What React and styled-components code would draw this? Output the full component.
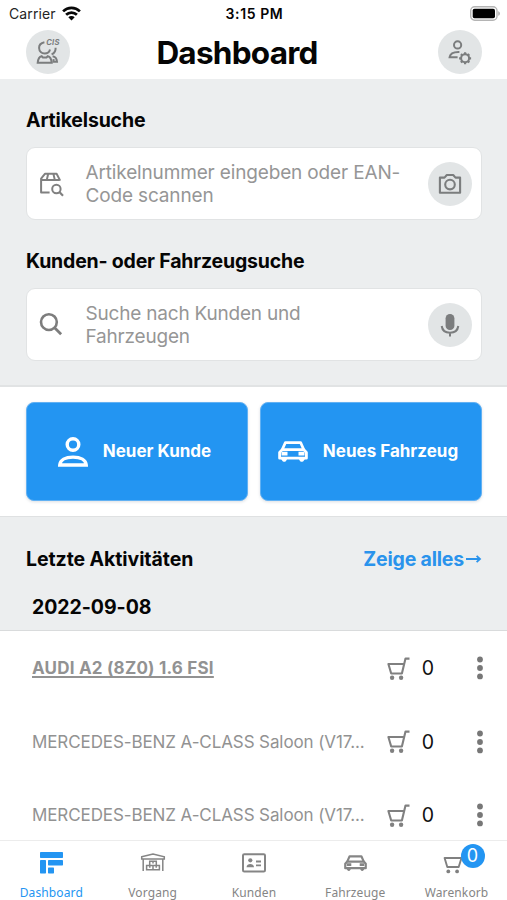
import React from "react";
import styled, { createGlobalStyle } from "styled-components";

const GlobalStyle = createGlobalStyle`
  *, *::before, *::after { box-sizing: border-box; }
  html, body { margin: 0; padding: 0; background: #fff; }
  body { font-family: Inter, "Liberation Sans", sans-serif; color: #050505; overflow: hidden; }
  button { font: inherit; border: 0; padding: 0; margin: 0; background: none; color: inherit; }
  svg { display: block; flex: none; overflow: visible; }
`;

const Screen = styled.div`
  width: 507px;
  height: 900px;
  display: flex;
  flex-direction: column;
  overflow: hidden;
  background: #fff;
`;

const Label = styled.span`
  font-size: ${(p) => p.$size}px;
  font-weight: ${(p) => p.$weight || 400};
  letter-spacing: ${(p) => p.$track || 0}px;
  color: ${(p) => p.$color || "inherit"};
  white-space: nowrap;
`;

const StatusBar = styled.div`
  height: 28px;
  flex: none;
  display: grid;
  grid-template-columns: 1fr auto 1fr;
  align-items: center;
  padding: 0 7px 0 9px;
  line-height: 28px;
`;

const Carrier = styled.div`
  display: flex;
  align-items: center;
  gap: 6px;
`;

const BatterySlot = styled.div`
  display: flex;
  justify-content: flex-end;
  padding-bottom: 2px;
`;

const Header = styled.header`
  height: 51px;
  flex: none;
  display: flex;
  align-items: flex-start;
  justify-content: space-between;
  padding: 2px 24.5px 0 25.5px;
`;

const Title = styled.h1`
  margin: 0 34px 0 0;
  font-size: 31.5px;
  line-height: 45px;
  font-weight: 700;
  letter-spacing: -0.75px;
`;

const RoundButton = styled.button`
  width: 44px;
  height: 44px;
  flex: none;
  border-radius: 50%;
  display: flex;
  align-items: center;
  justify-content: center;
  background: #e2e5e6;
  color: #7b7d7e;
`;

const SearchSection = styled.section`
  height: 308px;
  flex: none;
  padding: 27px 25px 0 26px;
  background: #eceeef;
  border-bottom: 2px solid #e1e3e4;
`;

const SearchGroup = styled.div`
  height: 141px;
`;

const SectionTitle = styled.h2`
  margin: 0;
  font-size: 19.5px;
  line-height: 28px;
  font-weight: 700;
  letter-spacing: ${(p) => p.$track || 0}px;
`;

const SearchBox = styled.div`
  margin-top: 13px;
  height: 73px;
  display: flex;
  align-items: center;
  padding: 0 9.5px 0 12px;
  background: #fff;
  border: 1px solid #e1e3e4;
  border-radius: 9px;
`;

const Placeholder = styled.div`
  flex: 1;
  margin-left: 20.5px;
  font-size: 19px;
  line-height: 23px;
  letter-spacing: ${(p) => p.$track || 0}px;
  color: #969696;
  white-space: pre-line;
`;

const Actions = styled.section`
  height: 129px;
  flex: none;
  display: grid;
  grid-template-columns: 1fr 1fr;
  gap: 12px;
  padding: 15px 25px 15px 26px;
`;

const ActionButton = styled.button`
  display: flex;
  align-items: center;
  justify-content: center;
  gap: 15px;
  padding: 0 ${(p) => p.$shift || 0}px 1px 0;
  background: #2395f2;
  color: #fff;
  border-radius: 8px;
  border: 1px solid #62b1f3;
  box-shadow: 0 1px 3px rgba(60, 80, 100, 0.18);
`;

const ActivityHeader = styled.section`
  height: 115px;
  flex: none;
  background: #eceeef;
  border-top: 1px solid #dfe1e2;
  border-bottom: 1px solid #d9dbdc;
  padding: 27.5px 26px 0;
`;

const HeadingRow = styled.div`
  display: flex;
  justify-content: space-between;
  align-items: center;
  height: 28px;
`;

const ShowAll = styled.button`
  display: flex;
  align-items: center;
  gap: 2px;
  color: #2a93ec;
`;

const DateLine = styled.div`
  margin: 20px 0 0 6px;
  height: 28px;
  line-height: 28px;
`;

const Activities = styled.main`
  height: 209px;
  flex: none;
  overflow: hidden;
  padding-top: 0.6px;
`;

const ActivityRow = styled.div`
  height: 73.4px;
  display: grid;
  grid-template-columns: 354.5px 23px 37px 1fr;
  align-items: center;
  padding: 0 23px 0 32px;
`;

const Vehicle = styled.span`
  font-size: 17px;
  line-height: 26px;
  color: #929292;
  font-weight: ${(p) => (p.$current ? 700 : 400)};
  letter-spacing: ${(p) => p.$track}px;
  text-decoration: ${(p) => (p.$current ? "underline" : "none")};
  text-decoration-thickness: 1.5px;
  text-underline-offset: 1.5px;
  text-decoration-skip-ink: none;
  white-space: nowrap;
  justify-self: start;
`;

const Count = styled.span`
  font-size: 19.5px;
  text-align: center;
  color: #111;
`;

const MenuSlot = styled.span`
  display: flex;
  justify-content: flex-end;
`;

const TabBar = styled.nav`
  height: 60px;
  flex: none;
  display: grid;
  grid-template-columns: repeat(5, 101.3px);
  padding-left: 0.7px;
  border-top: 1px solid #ececec;
  background: #fff;
`;

const Tab = styled.button`
  display: flex;
  flex-direction: column;
  align-items: center;
  color: ${(p) => (p.$active ? "#2395f2" : "#858585")};
`;

const TabIcon = styled.span`
  position: relative;
  height: 44px;
  width: 34px;
  display: flex;
  align-items: center;
  justify-content: center;
`;

const TabLabel = styled.span`
  font-family: "Noto Sans", sans-serif;
  font-size: 12px;
  line-height: 16px;
  letter-spacing: 0.12px;
`;

const Badge = styled.span`
  position: absolute;
  left: 21px;
  top: 3px;
  width: 24px;
  height: 24px;
  border-radius: 50%;
  background: #2395f2;
  color: #fff;
  font-size: 18px;
  line-height: 23px;
  text-align: center;
`;

const WifiIcon = () => (
  <svg width="19" height="15" viewBox="0 0 19 15" fill="none" stroke="#080808" strokeWidth="2.7">
    <path d="M1.1 4.4a12 12 0 0 1 16.8 0" />
    <path d="M4.1 7.8a7.7 7.7 0 0 1 10.8 0" />
    <path d="M9.5 13.6 6.3 10.3a4.5 4.5 0 0 1 6.4 0Z" fill="#080808" stroke="none" />
  </svg>
);

const BatteryIcon = () => (
  <svg width="31" height="15" viewBox="0 0 31 15">
    <rect x="1.7" y="0.8" width="26.3" height="13.4" rx="4" fill="#fff" stroke="#b4b4b4" strokeWidth="1.4" />
    <rect x="3.7" y="2.8" width="22.3" height="9.4" rx="1.8" fill="#000" />
    <path d="M29.3 5.2c2 .7 2 3.9 0 4.6Z" fill="#a5a5a5" />
  </svg>
);

const CisIcon = () => (
  <svg width="24" height="26" viewBox="0 0 24 26" fill="none" stroke="currentColor" strokeWidth="2">
    <path d="M8.4 3.2C5 3.9 3 6 3.1 9c.1 3.2 2.5 5.4 5.6 5.4 2.8 0 4.7-1.5 5.3-4" />
    <path d="M19.6 8.8c.2 3.4-1.2 5.5-4 6.6" />
    <path d="M5.6 17.2c-3 .6-3.6 3-3.9 6.6h14c-.3-3.8-1-6-3.9-6.6l-1.3 1.3H6.9Z" />
    <path d="M16.6 17.2c3.2.4 4.2 2.4 4.4 5.6h-3.6l.3-2.6" />
    <text x="10.2" y="5.6" fill="currentColor" stroke="none" fontFamily="Inter, sans-serif" fontSize="7.6" fontStyle="italic" fontWeight="700" letterSpacing=".3">CIS</text>
  </svg>
);

const UserSettingsIcon = () => (
  <svg width="24" height="25" viewBox="0 0 24 25" fill="none" stroke="currentColor" strokeWidth="2">
    <circle cx="9.6" cy="4.9" r="3.6" />
    <path d="M11.4 11.9C6 11.7 2.2 13.2 1.6 17.2h8" />
    <circle cx="17.1" cy="18.3" r="4" />
    <path strokeWidth="2.2" d="M17.1 12.3v2M17.1 22.3v2M11.1 18.3h2M21.1 18.3h2M12.9 14.1l1.4 1.4M19.9 21.1l1.4 1.4M12.9 22.5l1.4-1.4M19.9 15.5l1.4-1.4" />
  </svg>
);

const PackageSearchIcon = () => (
  <svg width="26" height="26" viewBox="0 0 26 26" fill="none" stroke="#808080" strokeWidth="2" strokeLinejoin="round">
    <path d="M10.6 21.4H2.1V7.6l3.8-4.8h11.7l3.6 6.8M2.1 8.9h18.7M9.2 2.8 7.8 8.9M14.4 2.8l1.4 6.1" />
    <circle cx="17.4" cy="18" r="4.2" />
    <path strokeWidth="2.2" d="m20.4 21 3.6 3.7" />
  </svg>
);

const SearchIcon = () => (
  <svg width="26" height="26" viewBox="0 0 26 26" fill="none" stroke="#7d7d7d" strokeWidth="2.6">
    <circle cx="9.9" cy="10.1" r="7.9" />
    <path strokeWidth="2.8" d="m15.6 15.8 6.5 6.5" />
  </svg>
);

const CameraIcon = () => (
  <svg width="24" height="22" viewBox="0 0 24 22" fill="none" stroke="currentColor" strokeWidth="2.1" strokeLinejoin="round">
    <path d="M1.9 4.6h4.6L8.8 2h6.4l2.3 2.6h4.6v15.2H1.9Z" />
    <circle cx="12" cy="11.6" r="4.8" />
  </svg>
);

const MicIcon = () => (
  <svg width="20" height="24" viewBox="0 0 20 24" fill="none" stroke="currentColor" strokeWidth="2">
    <rect x="5.6" y="1" width="8.8" height="16" rx="4.3" fill="currentColor" stroke="none" />
    <path d="M1.7 13c.6 4.4 3.8 6.7 8.3 6.7s7.7-2.3 8.3-6.7M10 19.6v3.8" />
  </svg>
);

const PersonIcon = () => (
  <svg width="30" height="31" viewBox="0 0 30 31" fill="none" stroke="currentColor" strokeWidth="3.4">
    <circle cx="15" cy="8.5" r="5.8" />
    <path d="M1.8 29c.4-5 5.5-7.9 13.2-7.9S27.8 24 28.2 29Z" />
  </svg>
);

const CarIcon = ({ width, weight = 2.8 }) => (
  <svg width={width} height={width * 0.7} viewBox="0 0 30 21" fill="none" stroke="currentColor" strokeWidth={weight} strokeLinejoin="round">
    <path d="M4.2 8.7 7.3 1.7h15.4l3.1 7" />
    <path d="M1.6 17.2V11.4l2.6-2.8h21.6l2.6 2.8v5.8Z" />
    <path fill="currentColor" stroke="none" d="M2.6 17.2h6.8l-1.2 2.5c-.7 1.5-3.2 1.5-3.9 0Zm18 0h6.8l-1.7 2.5c-.7 1.5-3.2 1.5-3.9 0ZM3.5 10.8h6v3.7h-6Zm17 0h6v3.7h-6Z" />
  </svg>
);

const CartIcon = () => (
  <svg width="23" height="23" viewBox="0 0 23 23" fill="none" stroke="#808080" strokeWidth="2.1" strokeLinejoin="round">
    <path d="M22.5 1.6h-4l-3.6 14.9H4.2L1.4 7h15.7" />
    <circle cx="5.1" cy="20.8" r="2.2" fill="#808080" stroke="none" />
    <circle cx="14.1" cy="20.8" r="2.2" fill="#808080" stroke="none" />
  </svg>
);

const BasketIcon = () => (
  <svg width="23" height="18" viewBox="0 0 23 18" fill="none" stroke="#808080" strokeWidth="1.9" strokeLinejoin="round">
    <path d="M19 2H1.6l2.7 9h11.4L18.8 1" />
    <circle cx="5.3" cy="15.4" r="1.9" fill="#808080" stroke="none" />
    <circle cx="14.1" cy="15.4" r="1.9" fill="#808080" stroke="none" />
  </svg>
);

const BasketSlot = styled.span`
  padding: 4px 4px 0 0;
`;

const MoreIcon = () => (
  <svg width="8" height="24" viewBox="0 0 8 24" fill="#777">
    <circle cx="4" cy="3.5" r="2.9" />
    <circle cx="4" cy="12" r="2.9" />
    <circle cx="4" cy="20.4" r="2.9" />
  </svg>
);

const ArrowIcon = () => (
  <svg width="15" height="10" viewBox="0 0 15 10" fill="none" stroke="currentColor" strokeWidth="1.8">
    <path d="M0 5h14M10.6 1.8 14 5l-3.4 3.2" />
  </svg>
);

const DashboardIcon = () => (
  <svg width="23" height="22" viewBox="0 0 23 22" fill="currentColor">
    <rect width="23" height="6" rx=".7" />
    <rect y="8" width="6" height="13.5" rx=".7" />
    <rect x="8" y="8" width="15" height="5.4" rx=".7" />
    <rect x="8" y="15.6" width="6" height="5.9" rx=".7" />
  </svg>
);

const WarehouseIcon = () => (
  <svg width="24" height="20" viewBox="0 0 24 20" fill="none" stroke="currentColor" strokeWidth="1.5">
    <path d="M.7 3.8 12 1l11.3 2.8V6H.7ZM2.2 6v12M21.8 6v12" />
    <path d="M8.7 8.2h6.6v4.4H8.7ZM5.6 12.6H12v4.2H5.6Zm6.4 0h6.4v4.2H12ZM12 8.2v2.3M8.8 12.6v2.2M15.2 12.6v2.2" />
  </svg>
);

const ContactsIcon = () => (
  <svg width="24" height="20" viewBox="0 0 24 20" fill="none" stroke="currentColor" strokeWidth="2">
    <rect x="1" y="1.2" width="22" height="17.4" rx="1.3" />
    <circle cx="8.3" cy="7.3" r="2.1" fill="currentColor" stroke="none" />
    <path fill="currentColor" stroke="none" d="M4.5 14.2c.2-4.4 7.3-4.4 7.5 0Z" />
    <path strokeWidth="1.8" d="M14 8.5h5M14 12.3h5" />
  </svg>
);

const activities = [
  { name: "AUDI A2 (8Z0) 1.6 FSI", current: true, track: 0.21 },
  { name: "MERCEDES-BENZ A-CLASS Saloon (V17...", track: -0.1 },
  { name: "MERCEDES-BENZ A-CLASS Saloon (V17...", track: -0.1 },
];

export default function App() {
  return (
    <>
      <GlobalStyle />
      <Screen>
        <StatusBar>
          <Carrier>
            <Label $size={14} $track={0.12} $color="#252525">Carrier</Label>
            <WifiIcon />
          </Carrier>
          <Label $size={14} $weight={600} $track={0.6}>3:15 PM</Label>
          <BatterySlot><BatteryIcon /></BatterySlot>
        </StatusBar>
        <Header>
          <RoundButton aria-label="CIS"><CisIcon /></RoundButton>
          <Title>Dashboard</Title>
          <RoundButton aria-label="Konto"><UserSettingsIcon /></RoundButton>
        </Header>

        <SearchSection>
          <SearchGroup>
            <SectionTitle $track={-0.17}>Artikelsuche</SectionTitle>
            <SearchBox>
              <PackageSearchIcon />
              <Placeholder $track={-0.15}>{"Artikelnummer eingeben oder EAN-\nCode scannen"}</Placeholder>
              <RoundButton aria-label="Kamera"><CameraIcon /></RoundButton>
            </SearchBox>
          </SearchGroup>
          <SearchGroup>
            <SectionTitle $track={-0.2}>Kunden- oder Fahrzeugsuche</SectionTitle>
            <SearchBox>
              <SearchIcon />
              <Placeholder $track={-0.2}>{"Suche nach Kunden und\nFahrzeugen"}</Placeholder>
              <RoundButton aria-label="Mikrofon"><MicIcon /></RoundButton>
            </SearchBox>
          </SearchGroup>
        </SearchSection>

        <Actions>
          <ActionButton $shift={5}>
            <PersonIcon />
            <Label $size={17} $weight={700}>Neuer Kunde</Label>
          </ActionButton>
          <ActionButton $shift={6}>
            <CarIcon width={30} />
            <Label $size={17} $weight={700}>Neues Fahrzeug</Label>
          </ActionButton>
        </Actions>

        <ActivityHeader>
          <HeadingRow>
            <SectionTitle $track={-0.08}>Letzte Aktivitäten</SectionTitle>
            <ShowAll>
              <Label $size={19.5} $weight={700} $track={-0.2}>Zeige alles</Label>
              <ArrowIcon />
            </ShowAll>
          </HeadingRow>
          <DateLine><Label $size={19.5} $weight={700} $track={-0.05}>2022-09-08</Label></DateLine>
        </ActivityHeader>

        <Activities>
          {activities.map((item, i) => (
            <ActivityRow key={i}>
              <Vehicle $current={item.current} $track={item.track}>{item.name}</Vehicle>
              <CartIcon />
              <Count>0</Count>
              <MenuSlot><MoreIcon /></MenuSlot>
            </ActivityRow>
          ))}
        </Activities>

        <TabBar>
          <Tab $active>
            <TabIcon><DashboardIcon /></TabIcon>
            <TabLabel>Dashboard</TabLabel>
          </Tab>
          <Tab>
            <TabIcon><WarehouseIcon /></TabIcon>
            <TabLabel>Vorgang</TabLabel>
          </Tab>
          <Tab>
            <TabIcon><ContactsIcon /></TabIcon>
            <TabLabel>Kunden</TabLabel>
          </Tab>
          <Tab>
            <TabIcon><CarIcon width={23} /></TabIcon>
            <TabLabel>Fahrzeuge</TabLabel>
          </Tab>
          <Tab>
            <TabIcon>
              <BasketSlot><BasketIcon /></BasketSlot>
              <Badge>0</Badge>
            </TabIcon>
            <TabLabel>Warenkorb</TabLabel>
          </Tab>
        </TabBar>
      </Screen>
    </>
  );
}
